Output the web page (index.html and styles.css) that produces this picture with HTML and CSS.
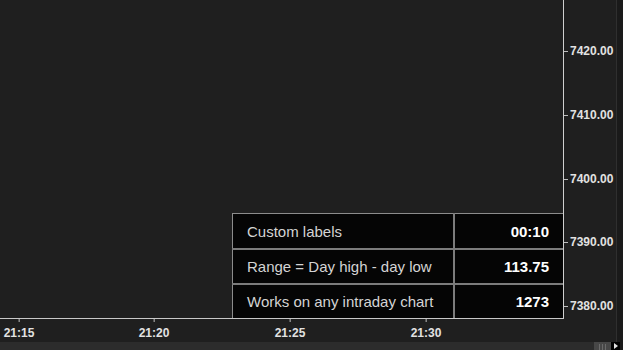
FILE: index.html
```html
<!DOCTYPE html>
<html>
<head>
<meta charset="utf-8">
<link rel="stylesheet" href="styles.css">
</head>
<body>
<div class="chart">
  <div class="main">
    <div class="plot">
      <table class="info">
        <tr><td class="lbl">Custom labels</td><td class="val">00:10</td></tr>
        <tr><td class="lbl">Range = Day high - day low</td><td class="val">113.75</td></tr>
        <tr><td class="lbl">Works on any intraday chart</td><td class="val">1273</td></tr>
      </table>
    </div>
    <div class="price-axis">
      <div class="price" style="top:44px"><span class="ptick"></span>7420.00</div>
      <div class="price" style="top:108px"><span class="ptick"></span>7410.00</div>
      <div class="price" style="top:172px"><span class="ptick"></span>7400.00</div>
      <div class="price" style="top:235px"><span class="ptick"></span>7390.00</div>
      <div class="price" style="top:299px"><span class="ptick"></span>7380.00</div>
    </div>
    <div class="vstrip"></div>
  </div>
  <div class="bottom">
    <div class="time-scale">
      <div class="time" style="left:19px"><span class="ttick"></span>21:15</div>
      <div class="time" style="left:154px"><span class="ttick"></span>21:20</div>
      <div class="time" style="left:290px"><span class="ttick"></span>21:25</div>
      <div class="time" style="left:426px"><span class="ttick"></span>21:30</div>
    </div>
    <div class="bottom-rest"></div>
    <div class="vstrip"></div>
  </div>
  <div class="hscroll">
    <div class="track"></div>
    <div class="thumb"><span></span><span></span><span></span></div>
    <div class="arrow"><svg width="4" height="6" viewBox="0 0 4 6"><path d="M0 0 L4 3 L0 6 Z" fill="#e0e0e0"/></svg></div>
    <div class="end"></div>
  </div>
</div>
</body>
</html>
```
FILE: styles.css
```css
html, body {
  margin: 0;
  padding: 0;
  background: #1f1f1f;
}
.chart {
  width: 623px;
  height: 350px;
  display: flex;
  flex-direction: column;
  font-family: "Liberation Sans", Arial, sans-serif;
  overflow: hidden;
}
.main {
  display: flex;
  height: 318px;
}
.plot {
  width: 563px;
  border-right: 1px solid #cfcfcf;
  display: flex;
  justify-content: flex-end;
  align-items: flex-end;
}
.info {
  border-collapse: collapse;
  width: 331px;
  background: #050505;
  border-top: 1px solid #8c8c8c;
  border-left: 1px solid #8c8c8c;
}
.info td {
  padding: 0;
  height: 33px;
  font-size: 15px;
  border-top: 2px solid #7c7c7c;
}
.info tr:first-child td {
  border-top: none;
  height: 34px;
}
.info tr:last-child td {
  height: 33px;
}
.info .lbl {
  width: 206px;
  padding-left: 14px;
  color: #d4d4d4;
  border-right: 2px solid #7c7c7c;
}
.info .val {
  text-align: right;
  padding-right: 14px;
  color: #ffffff;
  font-weight: bold;
}
.price-axis {
  flex: 1;
  position: relative;
}
.price {
  position: absolute;
  left: 6px;
  font-size: 12px;
  line-height: 14px;
  font-weight: bold;
  color: #e2e2e2;
  white-space: nowrap;
}
.ptick {
  position: absolute;
  left: -6px;
  top: 7px;
  width: 4px;
  height: 1px;
  background: #bdbdbd;
}
.vstrip {
  width: 7px;
  background: #1a1a1a;
  border-left: 1px solid #2f2f2f;
  box-sizing: border-box;
}
.bottom {
  display: flex;
  height: 24px;
}
.time-scale {
  width: 564px;
  border-top: 1px solid #c8c8c8;
  position: relative;
  box-sizing: border-box;
}
.bottom-rest {
  flex: 1;
}
.time {
  position: absolute;
  top: 7px;
  transform: translateX(-50%);
  font-size: 12px;
  line-height: 14px;
  font-weight: bold;
  color: #e2e2e2;
  white-space: nowrap;
}
.ttick {
  position: absolute;
  left: 50%;
  top: -7px;
  width: 1px;
  height: 3px;
  background: #bdbdbd;
}
.hscroll {
  display: flex;
  height: 8px;
  background: #2c2c2c;
}
.track {
  flex: 1;
}
.thumb {
  width: 17px;
  background: #474747;
  display: flex;
  justify-content: center;
  gap: 2px;
  padding-top: 2px;
  box-sizing: border-box;
}
.thumb span {
  width: 1px;
  height: 6px;
  background: #6a6a6a;
}
.arrow {
  width: 9px;
  background: #000;
  display: flex;
  align-items: center;
  justify-content: center;
}
.end {
  width: 3px;
  background: #1a1a1a;
}
```
